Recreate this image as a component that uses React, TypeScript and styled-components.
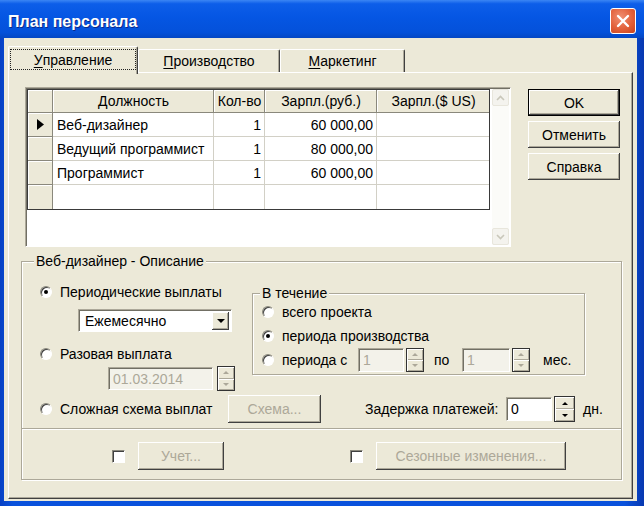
import styled, { createGlobalStyle } from "styled-components";

const GlobalStyle = createGlobalStyle`
  html, body { margin: 0; padding: 0; }
  body {
    font-family: "Liberation Sans", Arial, sans-serif;
    font-size: 14px;
    color: #000;
    background: #fff;
  }
`;

type Row = { name: string; qty: string; rub: string; usd: string; current?: boolean };

const rows: Row[] = [
  { name: "Веб-дизайнер", qty: "1", rub: "60 000,00", usd: "", current: true },
  { name: "Ведущий программист", qty: "1", rub: "80 000,00", usd: "" },
  { name: "Программист", qty: "1", rub: "60 000,00", usd: "" },
  { name: "", qty: "", rub: "", usd: "" },
];

const columns = [
  { title: "Должность", align: "left" as const },
  { title: "Кол-во", align: "right" as const },
  { title: "Зарпл.(руб.)", align: "right" as const },
  { title: "Зарпл.($ US)", align: "right" as const },
];

function Spinner({ w, h, off }: { w: number; h: number; off?: boolean }) {
  return (
    <Spin $w={w} $h={h}>
      <SpinHalf><Arrow $off={off} /></SpinHalf>
      <SpinHalf><Arrow $off={off} $down /></SpinHalf>
    </Spin>
  );
}

function Radio({ label, checked, w }: { label: string; checked?: boolean; w?: number }) {
  return (
    <RadioRow $w={w}>
      <RadioDot $checked={checked} />
      <span>{label}</span>
    </RadioRow>
  );
}

function ScrollArrow({ down }: { down?: boolean }) {
  return (
    <ScrollBtn>
      <svg width="9" height="6" viewBox="0 0 9 6">
        <path
          d={down ? "M1 1 L4.5 4.5 L8 1" : "M1 5 L4.5 1.5 L8 5"}
          fill="none"
          stroke="#c9c7ba"
          strokeWidth="1.6"
        />
      </svg>
    </ScrollBtn>
  );
}

export default function App() {
  return (
    <>
      <GlobalStyle />
      <Window>
        <TitleBar>
          <Title>План персонала</Title>
          <CloseBtn>
            <svg width="14" height="14" viewBox="0 0 14 14">
              <path d="M2 2 L12 12 M12 2 L2 12" stroke="#fff" strokeWidth="2.4" strokeLinecap="round" />
            </svg>
          </CloseBtn>
        </TitleBar>

        <Client>
          <TabStrip>
            <Tab $active $w={130}>
              <Focus><u>У</u>правление</Focus>
            </Tab>
            <Tab $w={142}><span><u>П</u>роизводство</span></Tab>
            <Tab $w={125}><span><u>М</u>аркетинг</span></Tab>
          </TabStrip>

          <Panel>
            <TopRow>
              <GridBox>
                <Table>
                  <Cell $kind="ind" />
                  {columns.map((c, i) => (
                    <Cell key={c.title} $kind="head" $align="center" $lastCol={i === columns.length - 1}>
                      {c.title}
                    </Cell>
                  ))}
                  {rows.map((r, ri) => {
                    const last = ri === rows.length - 1;
                    const vals = [r.name, r.qty, r.rub, r.usd];
                    return [
                      <Cell key={`i${ri}`} $kind="ind" $lastRow={last}>
                        {r.current && (
                          <svg width="7" height="11" viewBox="0 0 7 11">
                            <polygon points="0,0 7,5.5 0,11" fill="#000" />
                          </svg>
                        )}
                      </Cell>,
                      ...vals.map((v, ci) => (
                        <Cell
                          key={`c${ri}-${ci}`}
                          $kind="data"
                          $align={columns[ci].align}
                          $lastCol={ci === vals.length - 1}
                          $lastRow={last}
                        >
                          {v}
                        </Cell>
                      )),
                    ];
                  })}
                </Table>
                <ScrollBar>
                  <ScrollArrow />
                  <ScrollArrow down />
                </ScrollBar>
              </GridBox>

              <ButtonCol>
                <Btn $default $w={92} $h={27}>OK</Btn>
                <Btn $w={92} $h={27}>Отменить</Btn>
                <Btn $w={92} $h={27}>Справка</Btn>
              </ButtonCol>
            </TopRow>

            <Group>
              <Legend>Веб-дизайнер - Описание</Legend>
              <Upper>
                <LeftCol>
                  <Radio label="Периодические выплаты" checked />
                  <Combo>
                    <span>Ежемесячно</span>
                    <ComboBtn>
                      <Arrow $down $big />
                    </ComboBtn>
                  </Combo>
                  <Radio label="Разовая выплата" w={212} />
                  <DateRow>
                    <Edit $w={105} $off>01.03.2014</Edit>
                    <Spinner w={18} h={25} off />
                  </DateRow>
                </LeftCol>

                <Period>
                  <Legend $small>В течение</Legend>
                  <PeriodList>
                    <Radio label="всего проекта" />
                    <Radio label="периода производства" checked />
                    <FieldRow>
                      <Radio label="периода с" w={96} />
                      <Edit $w={46} $h={24} $off>1</Edit>
                      <Spinner w={18} h={24} off />
                      <Caption $w={38} $pl={10}>по</Caption>
                      <Edit $w={48} $h={24} $off>1</Edit>
                      <Spinner w={18} h={24} off />
                      <Caption $pl={13}>мес.</Caption>
                    </FieldRow>
                  </PeriodList>
                </Period>
              </Upper>

              <Lower>
                <Radio label="Сложная схема выплат" w={188} />
                <Btn $w={93} $h={28} disabled>Схема...</Btn>
                <Caption $w={141} $ml={44}>Задержка платежей:</Caption>
                <Edit $w={46} $h={24}>0</Edit>
                <Spinner w={21} h={26} />
                <Caption $pl={8}>дн.</Caption>
              </Lower>

              <Separator />

              <Bottom>
                <Check />
                <Btn $w={86} $h={28} disabled>Учет...</Btn>
                <Check $gap={113} />
                <Btn $w={190} $h={28} disabled>Сезонные изменения...</Btn>
              </Bottom>
            </Group>
          </Panel>
        </Client>
      </Window>
    </>
  );
}

const Window = styled.div`
  width: 644px;
  height: 506px;
  display: flex;
  flex-direction: column;
  background: linear-gradient(90deg, #0841c4 0%, #0a52dc 2%, #0a52dc 97%, #0838b0 100%);
`;

const TitleBar = styled.div`
  height: 38px;
  flex: none;
  box-sizing: border-box;
  padding: 4px 8px 0 8px;
  display: flex;
  align-items: center;
  justify-content: space-between;
  background: linear-gradient(180deg, #3b86f4 0%, #0d5ee9 10%, #0556e3 45%, #0451da 85%, #0447c4 100%);
`;

const Title = styled.div`
  margin-top: 2px;
  color: #fff;
  font-weight: bold;
  font-size: 16px;
  text-shadow: 1px 1px 0 #0c2a8a;
`;

const CloseBtn = styled.div`
  width: 26px;
  height: 26px;
  box-sizing: border-box;
  border: 1px solid #fff;
  border-radius: 3px;
  background: radial-gradient(circle at 40% 35%, #f09073 0%, #e2603a 55%, #c8421c 100%);
  display: flex;
  align-items: center;
  justify-content: center;
`;

const Client = styled.div`
  flex: 1;
  min-height: 0;
  margin: 0 7px 5px 4px;
  padding: 8px 4px 2px 4px;
  box-sizing: border-box;
  background: #ece9d8;
  display: flex;
  flex-direction: column;
`;

const TabStrip = styled.div`
  height: 26px;
  flex: none;
  display: flex;
  align-items: flex-end;
`;

const Tab = styled.div<{ $active?: boolean; $w: number }>`
  width: ${(p) => p.$w}px;
  height: ${(p) => (p.$active ? 28 : 23)}px;
  margin-bottom: ${(p) => (p.$active ? -2 : 0)}px;
  box-sizing: border-box;
  background: #ece9d8;
  border-top: 1px solid #fff;
  border-left: 1px solid #fff;
  border-right: 1px solid #404040;
  box-shadow: inset -1px 0 0 #aca899;
  border-radius: 2px 2px 0 0;
  display: flex;
  align-items: ${(p) => (p.$active ? "flex-start" : "center")};
  justify-content: center;
  position: relative;
  z-index: ${(p) => (p.$active ? 2 : 0)};
  u { text-decoration-thickness: 1px; text-underline-offset: 2px; }
`;

const Focus = styled.span`
  margin-top: 2px;
  width: 126px;
  height: 21px;
  box-sizing: border-box;
  border: 1px dotted #222;
  display: flex;
  align-items: center;
  justify-content: center;
`;

const Panel = styled.div`
  flex: 1;
  box-sizing: border-box;
  border: 1px solid;
  border-color: #fff #404040 #404040 #fff;
  box-shadow: inset -1px -1px 0 #aca899;
  padding: 14px 10px 0 12px;
  display: flex;
  flex-direction: column;
`;

const TopRow = styled.div`
  display: flex;
  align-items: flex-start;
`;

const GridBox = styled.div`
  margin-left: 4px;
  width: 486px;
  height: 160px;
  box-sizing: border-box;
  padding: 1px;
  background: #fff;
  border: 1px solid;
  border-color: #aca899 #fff #fff #aca899;
  box-shadow: inset 1px 1px 0 #716f64;
  display: flex;
  align-items: flex-start;
`;

const Table = styled.div`
  width: 463px;
  box-sizing: border-box;
  border: 1px solid #3a3a3a;
  display: grid;
  grid-template-columns: 25px 161px 51px 112px 112px;
  grid-template-rows: 23px repeat(4, 24px);
`;

const Cell = styled.div<{
  $kind: "head" | "ind" | "data";
  $align?: "left" | "right" | "center";
  $lastCol?: boolean;
  $lastRow?: boolean;
}>`
  box-sizing: border-box;
  display: flex;
  align-items: center;
  justify-content: ${(p) =>
    p.$kind === "ind" ? "center" : p.$align === "right" ? "flex-end" : p.$align === "center" ? "center" : "flex-start"};
  padding: 0 3px 0 4px;
  white-space: nowrap;
  background: ${(p) => (p.$kind === "data" ? "#fff" : "#ece9d8")};
  box-shadow: ${(p) => (p.$kind === "data" ? "none" : "inset 1px 1px 0 #fff")};
  border-right: ${(p) => (p.$lastCol ? "none" : `1px solid ${p.$kind === "data" ? "#d2d0c6" : "#8a887c"}`)};
  border-bottom: ${(p) => (p.$lastRow ? "none" : `1px solid ${p.$kind === "data" ? "#d2d0c6" : "#8a887c"}`)};
`;

const ScrollBar = styled.div`
  margin-left: 2px;
  width: 17px;
  height: 156px;
  background: #fbfbf8;
  display: flex;
  flex-direction: column;
  justify-content: space-between;
`;

const ScrollBtn = styled.div`
  width: 17px;
  height: 17px;
  box-sizing: border-box;
  border: 1px solid #e8e6dc;
  border-radius: 2px;
  background: #f4f3ee;
  display: flex;
  align-items: center;
  justify-content: center;
`;

const ButtonCol = styled.div`
  margin: 2px 0 0 17px;
  display: flex;
  flex-direction: column;
  gap: 5px;
`;

const Btn = styled.button<{ $default?: boolean; $w: number; $h: number }>`
  width: ${(p) => p.$w}px;
  height: ${(p) => p.$h}px;
  flex: none;
  margin: 0;
  padding: 0;
  font: inherit;
  font-size: 14px;
  color: ${(p) => (p.disabled ? "#aca899" : "#000")};
  background: #ece9d8;
  border: ${(p) => (p.$default ? "1px solid #000" : "none")};
  box-sizing: border-box;
  box-shadow: inset -1px -1px 0 #404040, inset 1px 1px 0 #fff, inset -2px -2px 0 #aca899;
`;

const Group = styled.fieldset`
  margin: 6px 0 0 0;
  padding: 0;
  min-width: 0;
  width: 601px;
  box-sizing: border-box;
  border: 1px solid #aca899;
  box-shadow: 1px 1px 0 #fff, inset 1px 1px 0 #fff;
`;

const Legend = styled.legend<{ $small?: boolean }>`
  margin-left: ${(p) => (p.$small ? -2 : 12)}px;
  padding: 0 2px;
  line-height: 16px;
  background: #ece9d8;
`;

const Upper = styled.div`
  display: flex;
  align-items: flex-start;
  padding: 14px 0 0 18px;
`;

const LeftCol = styled.div`
  width: 212px;
  display: flex;
  flex-direction: column;
  & > :nth-child(3) { margin-top: 13px; }
`;

const RadioRow = styled.div<{ $w?: number }>`
  height: 18px;
  flex: none;
  width: ${(p) => (p.$w ? `${p.$w}px` : "auto")};
  display: flex;
  align-items: center;
  gap: 8px;
  white-space: nowrap;
`;

const RadioDot = styled.span<{ $checked?: boolean }>`
  width: 12px;
  height: 12px;
  flex: none;
  box-sizing: border-box;
  border-radius: 50%;
  border: 1px solid;
  border-color: #8a887c #fff #fff #8a887c;
  background: #fff;
  box-shadow: inset 1px 1px 0 #404040;
  display: flex;
  align-items: center;
  justify-content: center;
  &::after {
    content: "";
    width: 4px;
    height: 4px;
    border-radius: 50%;
    background: ${(p) => (p.$checked ? "#000" : "transparent")};
  }
`;

const Combo = styled.div`
  margin: 8px 0 0 38px;
  width: 154px;
  height: 23px;
  box-sizing: border-box;
  background: #fff;
  border: 1px solid;
  border-color: #aca899 #fff #fff #aca899;
  box-shadow: inset 1px 1px 0 #716f64;
  padding: 2px 2px 2px 6px;
  display: flex;
  align-items: center;
  justify-content: space-between;
`;

const ComboBtn = styled.div`
  width: 17px;
  height: 18px;
  background: #ece9d8;
  box-shadow: inset -1px -1px 0 #404040, inset 1px 1px 0 #fff, inset -2px -2px 0 #aca899;
  display: flex;
  align-items: center;
  justify-content: center;
`;

const DateRow = styled.div`
  margin: 3px 0 0 68px;
  display: flex;
  align-items: center;
  gap: 2px;
`;

const Edit = styled.div<{ $w: number; $h?: number; $off?: boolean }>`
  width: ${(p) => p.$w}px;
  height: ${(p) => p.$h ?? 23}px;
  flex: none;
  box-sizing: border-box;
  padding-left: 4px;
  display: flex;
  align-items: center;
  background: ${(p) => (p.$off ? "#f3f2ea" : "#fff")};
  color: ${(p) => (p.$off ? "#aca899" : "#000")};
  border: 1px solid;
  border-color: #aca899 #fff #fff #aca899;
  box-shadow: inset 1px 1px 0 #716f64;
`;

const Spin = styled.div<{ $w: number; $h: number }>`
  width: ${(p) => p.$w}px;
  height: ${(p) => p.$h}px;
  flex: none;
  margin-left: 2px;
  box-sizing: border-box;
  border: 1px solid #333;
  background: #ece9d8;
  display: flex;
  flex-direction: column;
`;

const SpinHalf = styled.div`
  flex: 1;
  display: flex;
  align-items: center;
  justify-content: center;
  box-shadow: inset 1px 1px 0 #fff, inset -1px -1px 0 #aca899;
`;

const Arrow = styled.span<{ $down?: boolean; $off?: boolean; $big?: boolean }>`
  width: 0;
  height: 0;
  border-left: ${(p) => (p.$big ? 4 : 3)}px solid transparent;
  border-right: ${(p) => (p.$big ? 4 : 3)}px solid transparent;
  ${(p) => (p.$down ? "border-top" : "border-bottom")}: ${(p) => (p.$big ? 4 : 3)}px solid
    ${(p) => (p.$off ? "#aca899" : "#000")};
`;

const Period = styled.fieldset`
  margin: 2px 0 0 0;
  padding: 0 0 2px 9px;
  min-width: 0;
  width: 333px;
  box-sizing: border-box;
  border: 1px solid #aca899;
  box-shadow: 1px 1px 0 #fff, inset 1px 1px 0 #fff;
`;

const PeriodList = styled.div`
  padding-top: 2px;
  display: flex;
  flex-direction: column;
  & > :nth-child(2) { margin-top: 6px; }
  & > :nth-child(3) { margin-top: 3px; }
`;

const FieldRow = styled.div`
  height: 24px;
  display: flex;
  align-items: center;
`;

const Caption = styled.span<{ $w?: number; $pl?: number; $ml?: number }>`
  flex: none;
  box-sizing: border-box;
  width: ${(p) => (p.$w ? `${p.$w}px` : "auto")};
  padding-left: ${(p) => p.$pl ?? 0}px;
  margin-left: ${(p) => p.$ml ?? 0}px;
  white-space: nowrap;
`;

const Lower = styled.div`
  margin-top: 4px;
  height: 28px;
  padding-left: 18px;
  display: flex;
  align-items: center;
`;

const Separator = styled.div`
  margin-top: 5px;
  border-top: 1px solid #aca899;
  border-bottom: 1px solid #fff;
`;

const Bottom = styled.div`
  padding: 12px 0 9px 90px;
  display: flex;
  align-items: center;
  gap: 13px;
`;

const Check = styled.span<{ $gap?: number }>`
  width: 13px;
  height: 13px;
  flex: none;
  margin-left: ${(p) => p.$gap ?? 0}px;
  box-sizing: border-box;
  background: #fff;
  border: 1px solid;
  border-color: #8a887c #fff #fff #8a887c;
  box-shadow: inset 1px 1px 0 #404040;
`;
